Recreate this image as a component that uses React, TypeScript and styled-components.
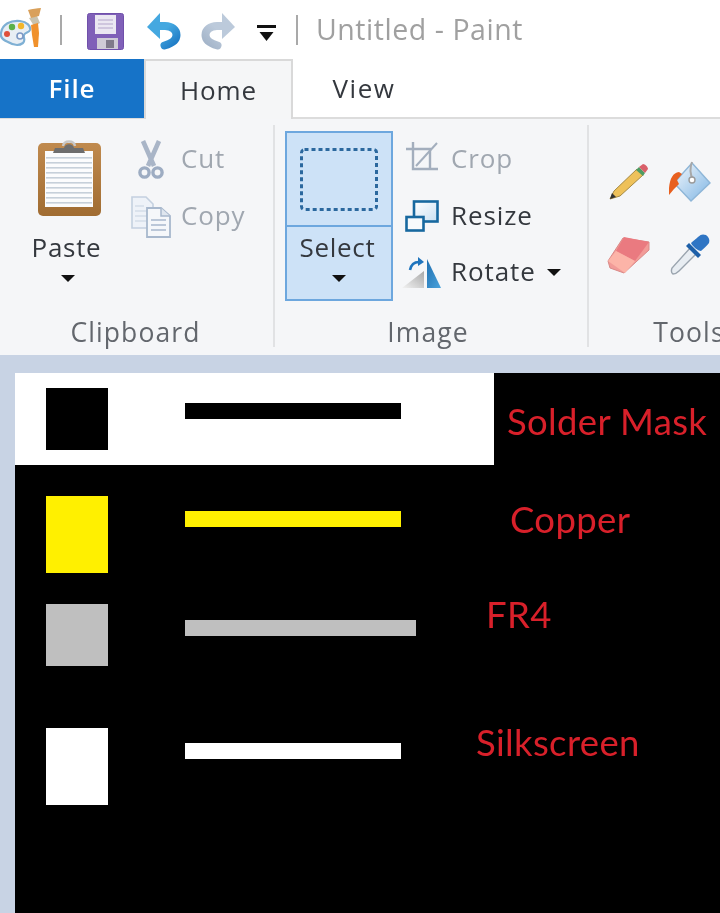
import React from "react";
import styled, { createGlobalStyle } from "styled-components";

const Global = createGlobalStyle`
  html, body { margin: 0; padding: 0; background: #fff; }
  #root { width: 720px; height: 913px; overflow: hidden; }
`;

const Window = styled.div`
  width: 720px;
  height: 913px;
  display: flex;
  flex-direction: column;
  overflow: hidden;
  font-family: "Open Sans", "Noto Sans", sans-serif;
  filter: blur(0.55px);
`;

const TitleBar = styled.div`
  height: 59px;
  flex: none;
  display: flex;
  align-items: center;
  background: #fff;
`;
const QuickIcon = styled.div<{ $w: number; $ml: number; $mt?: number }>`
  width: ${(p) => p.$w}px;
  margin-left: ${(p) => p.$ml}px;
  margin-top: ${(p) => p.$mt ?? 0}px;
  display: flex;
  flex: none;
`;
const TitleSep = styled.div<{ $ml: number }>`
  width: 2px;
  height: 30px;
  margin-left: ${(p) => p.$ml}px;
  background: #a9a9a9;
  flex: none;
`;
const TitleText = styled.div`
  margin-left: 18px;
  font-size: 28.5px;
  letter-spacing: 0.55px;
  color: #a0a0a0;
  white-space: nowrap;
  line-height: 1;
`;

const TabRow = styled.div`
  height: 60px;
  flex: none;
  display: flex;
  background: #fff;
  border-bottom: 2px solid #dcdcdc;
  box-sizing: border-box;
`;
const FileTab = styled.div`
  width: 144px;
  height: 59px;
  background: #1673c8;
  color: #fff;
  font-size: 26px;
  letter-spacing: 0.9px;
  font-weight: 600;
  display: flex;
  align-items: center;
  justify-content: center;
  padding-bottom: 1px;
  box-sizing: border-box;
`;
const Tab = styled.div<{ $active?: boolean }>`
  width: ${(p) => (p.$active ? 149 : 142)}px;
  height: ${(p) => (p.$active ? 60 : 58)}px;
  box-sizing: border-box;
  color: #34383e;
  font-size: 26px;
  letter-spacing: ${(p) => (p.$active ? 0.9 : 1.6)}px;
  display: flex;
  align-items: center;
  justify-content: center;
  background: ${(p) => (p.$active ? "#f5f6f7" : "#fff")};
  border: ${(p) => (p.$active ? "2px solid #d9d9d9" : "none")};
  border-bottom: none;
  z-index: 1;
`;

const Ribbon = styled.div`
  height: 236px;
  flex: none;
  display: flex;
  background: #f5f6f8;
  box-sizing: border-box;
  overflow: hidden;
`;
const Group = styled.div<{ $w: number }>`
  width: ${(p) => p.$w}px;
  flex: none;
  display: flex;
  flex-direction: column;
  padding-top: 12px;
  box-sizing: border-box;
`;
const GroupBody = styled.div<{ $pl: number }>`
  height: 170px;
  display: flex;
  padding-left: ${(p) => p.$pl}px;
`;
const GroupLabel = styled.div<{ $pr?: number }>`
  margin-top: 11px;
  height: 40px;
  line-height: 40px;
  padding-right: ${(p) => p.$pr ?? 0}px;
  text-align: center;
  font-size: 26.5px;
  letter-spacing: 1.1px;
  color: #63676d;
`;
const GroupSep = styled.div`
  width: 2px;
  flex: none;
  margin: 6px 0 8px;
  background: #e1e2e4;
`;

const LargeButton = styled.div<{ $w: number; $selected?: boolean }>`
  width: ${(p) => p.$w}px;
  flex: none;
  box-sizing: border-box;
  display: flex;
  flex-direction: column;
  align-items: center;
  background: ${(p) => (p.$selected ? "#cde2f7" : "transparent")};
  border: 2px solid ${(p) => (p.$selected ? "#6da7de" : "transparent")};
`;
const LargeIconArea = styled.div<{ $selected?: boolean }>`
  height: 94px;
  width: 100%;
  flex: none;
  display: flex;
  align-items: center;
  justify-content: center;
  box-sizing: border-box;
  border-bottom: 2px solid ${(p) => (p.$selected ? "#6da7de" : "transparent")};
`;
const LargeLabel = styled.div`
  font-size: 26px;
  letter-spacing: 0.7px;
  color: #34383e;
  line-height: 40px;
  padding-right: 3px;
`;
const DownCaret = styled.div`
  width: 0;
  height: 0;
  margin-top: 8px;
  border-left: 7px solid transparent;
  border-right: 7px solid transparent;
  border-top: 7px solid #111;
`;
const InlineCaret = styled(DownCaret)`
  margin: 0 0 0 11px;
`;
const SmallColumn = styled.div<{ $ml: number }>`
  display: flex;
  flex-direction: column;
  margin-left: ${(p) => p.$ml}px;
`;
const SmallButton = styled.div`
  height: 57px;
  display: flex;
  align-items: center;
`;
const SmallIcon = styled.div`
  width: 44px;
  margin-right: 8px;
  display: flex;
  justify-content: center;
  flex: none;
`;
const SmallText = styled.span<{ $disabled?: boolean }>`
  font-size: 26px;
  letter-spacing: 0.9px;
  line-height: 36px;
  margin-top: -3px;
  color: ${(p) => (p.$disabled ? "#a0a7b0" : "#34383e")};
  white-space: nowrap;
`;
const ToolGrid = styled.div`
  display: grid;
  grid-template-columns: 61px 61px;
  grid-auto-rows: 73px;
  margin-top: 14px;
`;
const ToolCell = styled.div`
  display: flex;
  align-items: center;
  justify-content: center;
`;

const Workspace = styled.div`
  flex: 1;
  min-height: 0;
  background: #c8d3e4;
  padding: 18px 0 0 15px;
  display: flex;
`;
const Canvas = styled.div`
  flex: 1;
  background: #000;
  position: relative;
  overflow: hidden;
`;
const WhiteBlock = styled.div`
  position: absolute;
  left: 0;
  top: 0;
  width: 479px;
  height: 92px;
  background: #fff;
`;
const Swatch = styled.div<{ $top: number; $h: number; $c: string }>`
  position: absolute;
  left: 31px;
  top: ${(p) => p.$top}px;
  width: 62px;
  height: ${(p) => p.$h}px;
  background: ${(p) => p.$c};
`;
const Bar = styled.div<{ $top: number; $w: number; $c: string }>`
  position: absolute;
  left: 170px;
  top: ${(p) => p.$top}px;
  width: ${(p) => p.$w}px;
  height: 16px;
  background: ${(p) => p.$c};
`;
const LayerName = styled.div<{ $left: number; $top: number }>`
  position: absolute;
  left: ${(p) => p.$left}px;
  top: ${(p) => p.$top}px;
  font-family: "Lato", "Open Sans", sans-serif;
  font-size: 36.5px;
  letter-spacing: 0.35px;
  line-height: 40px;
  color: #d8202a;
  white-space: nowrap;
`;

const PaletteIcon = () => (
  <svg width="42" height="40" viewBox="0 0 42 40">
    <path d="M1 25C2 16 11 12 20 13c7 1 11 5 10 9-1 3-5 2-6 5-1 3 2 5-1 8-4 3-10 2-15-1C3 32 0 29 1 25z" fill="#e8eef4" stroke="#7fb0d4" strokeWidth="2.2" />
    <circle cx="7" cy="26" r="3" fill="#e0503a" />
    <circle cx="12" cy="19" r="3.2" fill="#5bb04a" />
    <circle cx="21" cy="18" r="3.2" fill="#f2b62c" />
    <circle cx="20" cy="28" r="3" fill="#f4f6fa" stroke="#7d98c4" strokeWidth="1.6" />
    <path d="M29 10l8-2 3 7-6 3z" fill="#c9c2ad" />
    <path d="M31 17l7-2 1 10-1 14h-4l-2-12z" fill="#f0912c" />
    <path d="M28 2c4-1 9-2 13-2l-2 8-8 2z" fill="#d9a05a" />
  </svg>
);
const SaveIcon = () => (
  <svg width="37" height="37" viewBox="0 0 37 37">
    <rect x="0.5" y="0.5" width="36" height="36" rx="2" fill="#8060b8" stroke="#7050aa" />
    <rect x="8" y="2" width="21" height="19" fill="#ebe7f2" />
    <path d="M11 7h15M11 11h15M11 15h15" stroke="#c6bcd8" strokeWidth="1.5" />
    <rect x="10" y="25" width="21" height="11" fill="#cfcbd6" />
    <rect x="19" y="27" width="8" height="8" fill="#7f7a8a" />
  </svg>
);
const ArrowIcon = ({ c, c2, id, flip }: { c: string; c2: string; id: string; flip?: boolean }) => (
  <svg width="36" height="37" viewBox="0 0 36 37" style={flip ? { transform: "scaleX(-1)" } : undefined}>
    <defs>
      <linearGradient id={id} x1="0" y1="0" x2="1" y2="1">
        <stop offset="0.3" stopColor={c} />
        <stop offset="1" stopColor={c2} />
      </linearGradient>
    </defs>
    <path d="M10 13h9c7 0 11.500 4 11.500 9 0 5-5 8.500-12 10.500" fill="none" stroke={`url(#${id})`} strokeWidth="8" strokeLinecap="round" />
    <path d="M1 14L14 0v26z" fill={c} />
  </svg>
);
const QatCaret = () => (
  <svg width="19" height="17" viewBox="0 0 19 17">
    <rect x="0" y="0" width="19" height="3" fill="#111" />
    <path d="M2.500 7h14L9.500 16z" fill="#111" />
  </svg>
);
const ClipboardIcon = () => (
  <svg width="68" height="80" viewBox="0 0 68 80">
    <defs>
      <linearGradient id="wood" x1="0" y1="0" x2="0" y2="1">
        <stop offset="0" stopColor="#c08a4e" />
        <stop offset="1" stopColor="#a06c32" />
      </linearGradient>
    </defs>
    <rect x="4" y="4" width="63" height="73" rx="5" fill="url(#wood)" />
    <rect x="11" y="12" width="48" height="56" fill="#fbfcfd" />
    {[18, 23, 28, 33, 38, 43, 48, 53, 58, 63].map((y) => (
      <rect key={y} x="12" y={y} width="46" height="1.6" fill="#c6d0da" />
    ))}
    <path d="M19 14l2-5h9c1-5 9-5 10 0h9l2 5z" fill="#6e6e6e" />
    <path d="M29 7c1-6 11-6 12 0" fill="none" stroke="#c8c8c8" strokeWidth="2.4" />
  </svg>
);
const ScissorsIcon = () => (
  <svg width="26" height="40" viewBox="0 0 26 40">
    <path d="M5 1l11 25M21 1L10 26" stroke="#a9b5c7" strokeWidth="4.6" fill="none" />
    <circle cx="6.500" cy="32.500" r="4.600" fill="none" stroke="#9dacc2" strokeWidth="3.4" />
    <circle cx="19.500" cy="32.500" r="4.600" fill="none" stroke="#9dacc2" strokeWidth="3.4" />
  </svg>
);
const CopyIcon = () => (
  <svg width="40" height="42" viewBox="0 0 40 42">
    <path d="M1 1h14l7 7v24H1z" fill="#eef2f8" stroke="#c4d0df" strokeWidth="1.6" />
    <path d="M4 10h9M4 15h14M4 20h14M4 25h14" stroke="#d4dde8" strokeWidth="1.500" />
    <path d="M16 12h14l9 8v21H16z" fill="#f5f7fa" stroke="#a8b8cd" strokeWidth="1.800" />
    <path d="M30 12v8h9" fill="#dfe6ef" stroke="#a8b8cd" strokeWidth="1.500" />
    <path d="M20 24h15M20 29h15M20 34h15" stroke="#a8b8cd" strokeWidth="1.600" />
  </svg>
);
const SelectIcon = () => (
  <svg width="78" height="63" viewBox="0 0 78 63">
    <rect x="1.500" y="1.500" width="75" height="60" rx="3" fill="none" stroke="#2b689e" strokeWidth="3" strokeDasharray="4 3" />
  </svg>
);
const CropIcon = () => (
  <svg width="34" height="34" viewBox="-2 0 34 34">
    <path d="M0 7h24v20M7 0v27h25" fill="none" stroke="#a3aebd" strokeWidth="2.400" />
    <path d="M10 24L31 1" stroke="#a3aebd" strokeWidth="2" />
  </svg>
);
const ResizeIcon = () => (
  <svg width="36" height="32" viewBox="-2 0 36 32">
    <defs>
      <linearGradient id="rz" x1="0" y1="0" x2="1" y2="1">
        <stop offset="0" stopColor="#ffffff" />
        <stop offset="1" stopColor="#c9e0f2" />
      </linearGradient>
    </defs>
    <rect x="9" y="1.500" width="23.500" height="20" fill="url(#rz)" stroke="#17689f" strokeWidth="2.600" />
    <rect x="1.500" y="17" width="17" height="13.500" fill="#f7fafc" stroke="#17689f" strokeWidth="2.600" />
  </svg>
);
const RotateIcon = () => (
  <svg width="41" height="32" viewBox="0 0 41 32">
    <defs>
      <linearGradient id="rg" x1="1" y1="0" x2="0" y2="1">
        <stop offset="0" stopColor="#a8a8a8" />
        <stop offset="1" stopColor="#f2f2f2" />
      </linearGradient>
      <linearGradient id="rb" x1="0" y1="0" x2="1" y2="1">
        <stop offset="0" stopColor="#1f6fb0" />
        <stop offset="1" stopColor="#4ba3dc" />
      </linearGradient>
    </defs>
    <path d="M1 31l22-17v17z" fill="url(#rg)" />
    <path d="M26 2l14 29H26z" fill="url(#rb)" />
    <path d="M9 13c1-5 4-8 9-8" fill="none" stroke="#1f74bd" strokeWidth="2.600" />
    <path d="M17 0l6 5-6 4z" fill="#1f74bd" />
  </svg>
);
const PencilIcon = () => (
  <svg width="40" height="38" viewBox="0 0 40 38">
    <path d="M1 36l4-8L28 6l6 6-23 21z" fill="#eec15a" stroke="#a58a44" strokeWidth="1" />
    <path d="M1 36l2-6 4 4z" fill="#333" />
    <path d="M27 7l7 6 2-3-6-6z" fill="#4e9b63" />
    <path d="M30 4l6 6 3-4c0-2-3-5-5-5z" fill="#d9606a" />
  </svg>
);
const BucketIcon = () => (
  <svg width="44" height="44" viewBox="0 0 44 44">
    <defs>
      <linearGradient id="bk" x1="0" y1="0" x2="1" y2="1">
        <stop offset="0" stopColor="#f4f8fc" />
        <stop offset="1" stopColor="#7fb5e4" />
      </linearGradient>
    </defs>
    <path d="M24 3l18 20-19 18L6 23z" fill="url(#bk)" stroke="#8eb6d8" strokeWidth="1.400" />
    <path d="M24 2c-2 5-2 12 1 18" fill="none" stroke="#a8a8a8" strokeWidth="2" />
    <circle cx="24" cy="20" r="3" fill="#fff" stroke="#9a9a9a" strokeWidth="1.400" />
    <path d="M11 12c-6 1-9 6-10 16l0 7 5-6 5-5-2-4 5-6z" fill="#e8601f" />
  </svg>
);
const EraserIcon = () => (
  <svg width="44" height="38" viewBox="0 0 44 38">
    <path d="M1 25L16 2l26 4 0 8L17 37 3 32z" fill="#f29b98" stroke="#d98a88" strokeWidth="1" />
    <path d="M9 15L17 1l25 5-14 19z" fill="#ea7a80" />
    <path d="M1 25l8-10 19 10-10 12z" fill="#fcb4a8" />
  </svg>
);
const PickerIcon = () => (
  <svg width="40" height="41" viewBox="0 0 40 41">
    <path d="M21 13l6 6L9 37c-2 2-4 3-6 3-2-1-2-3-1-6z" fill="#e8edf2" stroke="#9aa4ae" strokeWidth="1.400" />
    <path d="M16 12l12 12 3-3-12-12z" fill="#1d5fa8" />
    <path d="M21 9c2-2 5-4 7-6 3-3 5-3 8-2 3 2 4 5 3 8-2 3-5 5-8 8-3 0-9-5-10-8z" fill="#2f75c4" />
  </svg>
);

const layers = [
  { c: "#fff000", top: 123, h: 77, bar: 138, w: 216, name: "Copper", left: 495, nameTop: 126 },
  { c: "#bfbfbf", top: 231, h: 62, bar: 247, w: 231, name: "FR4", left: 471, nameTop: 221 },
  { c: "#ffffff", top: 355, h: 77, bar: 370, w: 216, name: "Silkscreen", left: 461, nameTop: 349 },
];

export default function App() {
  return (
    <Window>
      <Global />
      <TitleBar>
        <QuickIcon $w={42} $ml={0} $mt={-3}><PaletteIcon /></QuickIcon>
        <TitleSep $ml={18} />
        <QuickIcon $w={37} $ml={25} $mt={3}><SaveIcon /></QuickIcon>
        <QuickIcon $w={36} $ml={22} $mt={3}><ArrowIcon id="undoG" c="#45a8e0" c2="#1b78c4" /></QuickIcon>
        <QuickIcon $w={36} $ml={18} $mt={3}><ArrowIcon id="redoG" c="#bccadb" c2="#a2b3c8" flip /></QuickIcon>
        <QuickIcon $w={19} $ml={21} $mt={7}><QatCaret /></QuickIcon>
        <TitleSep $ml={20} />
        <TitleText>Untitled - Paint</TitleText>
      </TitleBar>
      <TabRow>
        <FileTab>File</FileTab>
        <Tab $active>Home</Tab>
        <Tab>View</Tab>
      </TabRow>
      <Ribbon>
        <Group $w={273}>
          <GroupBody $pl={22}>
            <LargeButton $w={92}>
              <LargeIconArea><ClipboardIcon /></LargeIconArea>
              <LargeLabel>Paste</LargeLabel>
              <DownCaret />
            </LargeButton>
            <SmallColumn $ml={15}>
              <SmallButton>
                <SmallIcon><ScissorsIcon /></SmallIcon>
                <SmallText $disabled>Cut</SmallText>
              </SmallButton>
              <SmallButton>
                <SmallIcon><CopyIcon /></SmallIcon>
                <SmallText $disabled>Copy</SmallText>
              </SmallButton>
            </SmallColumn>
          </GroupBody>
          <GroupLabel $pr={2}>Clipboard</GroupLabel>
        </Group>
        <GroupSep />
        <Group $w={312}>
          <GroupBody $pl={10}>
            <LargeButton $w={108} $selected>
              <LargeIconArea $selected><SelectIcon /></LargeIconArea>
              <LargeLabel>Select</LargeLabel>
              <DownCaret />
            </LargeButton>
            <SmallColumn $ml={6}>
              <SmallButton>
                <SmallIcon><CropIcon /></SmallIcon>
                <SmallText $disabled>Crop</SmallText>
              </SmallButton>
              <SmallButton>
                <SmallIcon><ResizeIcon /></SmallIcon>
                <SmallText>Resize</SmallText>
              </SmallButton>
              <SmallButton>
                <SmallIcon><RotateIcon /></SmallIcon>
                <SmallText>Rotate</SmallText>
                <InlineCaret />
              </SmallButton>
            </SmallColumn>
          </GroupBody>
          <GroupLabel $pr={6}>Image</GroupLabel>
        </Group>
        <GroupSep />
        <Group $w={200}>
          <GroupBody $pl={9}>
            <ToolGrid>
              <ToolCell><PencilIcon /></ToolCell>
              <ToolCell><BucketIcon /></ToolCell>
              <ToolCell><EraserIcon /></ToolCell>
              <ToolCell><PickerIcon /></ToolCell>
            </ToolGrid>
          </GroupBody>
          <GroupLabel>Tools</GroupLabel>
        </Group>
      </Ribbon>
      <Workspace>
        <Canvas>
          <WhiteBlock />
          <Swatch $top={15} $h={62} $c="#000" />
          <Bar $top={30} $w={216} $c="#000" />
          <LayerName $left={492} $top={28}>Solder Mask</LayerName>
          {layers.map((l) => (
            <React.Fragment key={l.name}>
              <Swatch $top={l.top} $h={l.h} $c={l.c} />
              <Bar $top={l.bar} $w={l.w} $c={l.c} />
              <LayerName $left={l.left} $top={l.nameTop}>{l.name}</LayerName>
            </React.Fragment>
          ))}
        </Canvas>
      </Workspace>
    </Window>
  );
}
